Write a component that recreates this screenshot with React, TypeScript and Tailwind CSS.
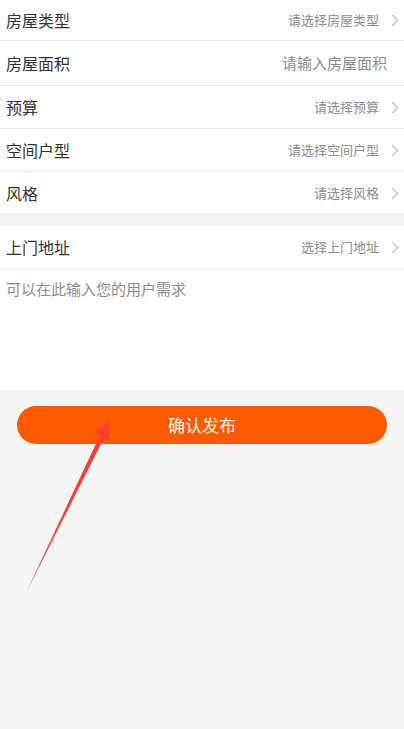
const font = { fontFamily: '"Noto Sans CJK SC", "Noto Sans", sans-serif' };

function Chevron() {
  return (
    <svg width="8" height="13" viewBox="0 0 8 13" className="shrink-0">
      <path d="M1.2 1 L6.6 6.5 L1.2 12" fill="none" stroke="#c8c8c8" strokeWidth="1.7" />
    </svg>
  );
}

function SelectRow({ label, hint, h }: { label: string; hint: string; h: string }) {
  return (
    <div className={`flex items-center justify-between border-b border-[#ebebeb] bg-white pl-[6px] pr-[5px] ${h}`}>
      <span className="text-[16px] text-[#333]">{label}</span>
      <div className="flex items-center gap-[12px]">
        <span className="text-[13px] text-[#8c8c8c]">{hint}</span>
        <Chevron />
      </div>
    </div>
  );
}

export default function App() {
  return (
    <main className="relative min-h-[729px] bg-[#f5f5f5]" style={font}>
      <div className="bg-white">
        <SelectRow label="房屋类型" hint="请选择房屋类型" h="h-[41px]" />
        <div className="flex h-[45px] items-center justify-between border-b border-[#ebebeb] pl-[6px] pr-[17px]">
          <span className="text-[16px] text-[#333]">房屋面积</span>
          <span className="text-[15px] text-[#8c8c8c]">请输入房屋面积</span>
        </div>
        <SelectRow label="预算" hint="请选择预算" h="h-[43px]" />
        <SelectRow label="空间户型" hint="请选择空间户型" h="h-[43px]" />
        <SelectRow label="风格" hint="请选择风格" h="h-[43px]" />
      </div>

      <div className="mt-[11px] bg-white">
        <SelectRow label="上门地址" hint="选择上门地址" h="h-[43px]" />
        <div className="h-[121px] px-[6px] pt-[9px] text-[15px] text-[#8c8c8c]">可以在此输入您的用户需求</div>
      </div>

      <div className="px-[17px] pt-[16px]">
        <button className="flex h-[38px] w-full items-center justify-center rounded-full bg-[#ff5a00] text-[17px] text-white">
          确认发布
        </button>
      </div>

      <svg className="pointer-events-none absolute left-0 top-0" width="404" height="729" viewBox="0 0 404 729">
        <polygon points="109,422 109,440 104,438 26,593 100,435 95,432" fill="#ff3b3b" />
      </svg>
    </main>
  );
}
